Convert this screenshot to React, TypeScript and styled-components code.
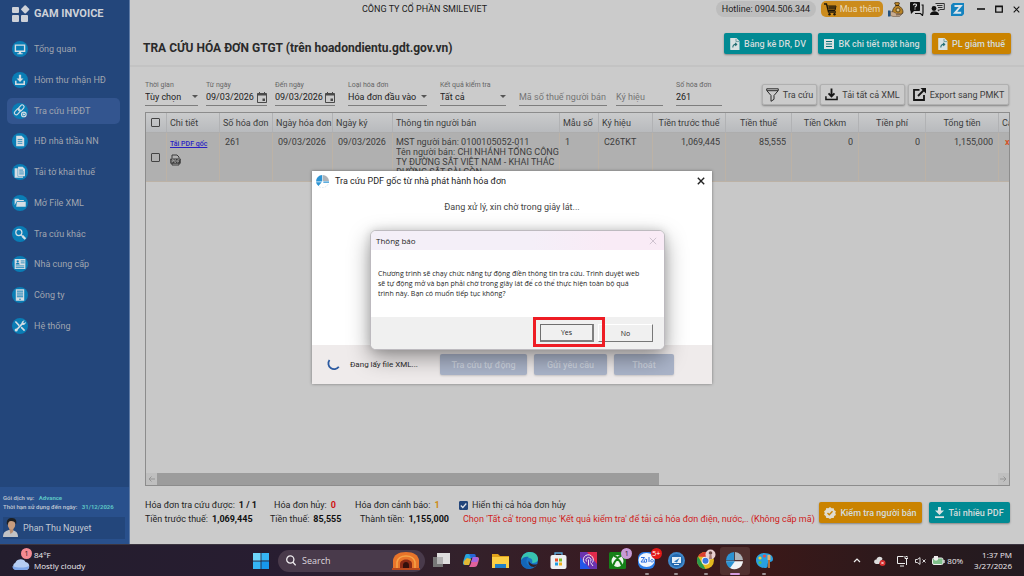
import React from "react";
import styled, { createGlobalStyle } from "styled-components";

const ui = `Roboto, "Noto Sans", sans-serif`;
const win = `"Open Sans", "Noto Sans", sans-serif`;

const GlobalStyle = createGlobalStyle`
  *, *::before, *::after { box-sizing: border-box; }
  body { margin: 0; background: #cbcbcb; font-family: ${ui}; font-size: 9px; color: #2b2b2b; }
  button, input, select { font: inherit; color: inherit; margin: 0; }
  svg { display: block; flex: none; }
`;

/* ---------- frame ---------- */
const Desktop = styled.div`
  position: relative;
  display: flex;
  flex-direction: column;
  min-height: 100vh;
`;
const AppWindow = styled.div`
  flex: 1;
  display: flex;
`;

/* ---------- sidebar ---------- */
const Sidebar = styled.aside`
  flex: none;
  width: 130px;
  display: flex;
  flex-direction: column;
  background: #23467b;
  border-right: 1px solid #5f7ba6;
`;
const Brand = styled.div`
  height: 34px;
  padding: 0 0 7px 12px;
  display: flex;
  align-items: center;
  gap: 4px;
  font-size: 11px;
  font-weight: 700;
  color: #cdd1d8;
`;
const Nav = styled.nav`
  display: grid;
  grid-auto-rows: 1fr;
  align-items: center;
  height: 307px;
  padding: 0 9px 0 7px;
`;
const NavLink = styled.a<{ $active?: boolean }>`
  display: flex;
  align-items: center;
  gap: 6px;
  height: 26px;
  padding-left: 5px;
  border-radius: 5px;
  font-size: 9px;
  color: #a0a5af;
  text-decoration: none;
  background: ${(p) => (p.$active ? "#33558f" : "transparent")};
`;
const Account = styled.div`
  margin-top: auto;
  padding: 6px 4px 5px 3px;
  background: #29508c;
  font-size: 6px;
  line-height: 9px;
  font-weight: 500;
  color: #c3c9d3;
`;
const PlanLine = styled.div`
  white-space: nowrap;
`;
const PlanValue = styled.b`
  margin-left: 3px;
  color: #5cc3c4;
`;
const User = styled.div`
  margin-top: 6px;
  height: 22px;
  display: flex;
  align-items: center;
  gap: 4px;
  background: #23467b;
  font-size: 9px;
  font-weight: 400;
`;

/* ---------- main ---------- */
const Main = styled.main`
  flex: 1;
  min-width: 0;
  display: flex;
  flex-direction: column;
`;
const TitleBar = styled.header`
  height: 18px;
  display: flex;
  align-items: center;
  padding-right: 2px;
`;
const Company = styled.div`
  margin-left: 232px;
  font-size: 9px;
  color: #1d1d1d;
`;
const Hotline = styled.div`
  margin-left: auto;
  height: 16px;
  width: 100px;
  border-radius: 8px;
  background: #bdbdbd;
  display: flex;
  align-items: center;
  justify-content: center;
  color: #1d1d1d;
`;
const BuyButton = styled.button`
  margin: 0 5px;
  width: 62px;
  height: 16px;
  padding: 0;
  border: 0;
  border-radius: 5px;
  background: #cc8c1d;
  color: #e8d9b8;
  display: flex;
  align-items: center;
  justify-content: center;
  gap: 3px;
`;
const TitleIcons = styled.div`
  display: flex;
  gap: 6px;
  margin-right: 11px;
`;
const IconButton = styled.button`
  padding: 0;
  border: 0;
  background: none;
  display: flex;
  align-items: center;
  justify-content: center;
`;
const WindowButtons = styled.div`
  display: flex;
  gap: 7px;
  & > button { width: 11px; height: 12px; }
`;
const PageHead = styled.div`
  height: 49px;
  padding: 4px 13px 0;
  display: flex;
  align-items: center;
  justify-content: space-between;
  border-bottom: 2px solid #c3c3c3;
`;
const PageTitle = styled.h1`
  margin: 9px 0 0;
  font-size: 12px;
  line-height: 16px;
  font-weight: 700;
  color: #2a2a2a;
`;
const ButtonRow = styled.div<{ $gap: number }>`
  display: flex;
  gap: ${(p) => p.$gap}px;
`;
const ActionButton = styled.button<{ $tone: "teal" | "amber" | "plain"; $width: number }>`
  width: ${(p) => p.$width}px;
  height: 21px;
  padding: 0;
  display: flex;
  align-items: center;
  justify-content: center;
  gap: 4px;
  white-space: nowrap;
  font-size: 9px;
  font-weight: ${(p) => (p.$tone === "plain" ? 400 : 500)};
  border-radius: 2px;
  border: ${(p) => (p.$tone === "plain" ? "1px solid #b0b0b0" : "0")};
  background: ${(p) => ({ teal: "#018a93", amber: "#ca8300", plain: "#cbcbcb" })[p.$tone]};
  color: ${(p) => (p.$tone === "plain" ? "#3c3c3c" : "#d3dcdc")};
  box-shadow: 0 1px 2px rgba(0, 0, 0, 0.35);
`;
const FilterActions = styled(ButtonRow)`
  margin: 11px 0 0 auto;
  align-self: flex-start;
`;
const Filters = styled.form`
  height: 45px;
  padding: 6px 15px 0 15px;
  display: flex;
  align-items: center;
`;
const Field = styled.label<{ $width: number; $after?: number }>`
  width: ${(p) => p.$width}px;
  margin-right: ${(p) => p.$after ?? 13}px;
  height: 27px;
  display: flex;
  flex-direction: column;
  justify-content: flex-end;
  border-bottom: 1px solid #7d7d7d;
`;
const FieldLabel = styled.span`
  font-size: 7px;
  line-height: 8px;
  white-space: nowrap;
  color: #666;
`;
const FieldBody = styled.span`
  display: flex;
  align-items: center;
  height: 16px;
`;
const fieldText = `
  flex: 1;
  width: 0;
  min-width: 0;
  padding: 0;
  border: 0;
  outline: 0;
  background: none;
  font-size: 9px;
  line-height: 14px;
  color: #222;
`;
const TextInput = styled.input`
  ${fieldText}
  &::placeholder { color: #747474; opacity: 1; }
`;
const Select = styled.select`
  ${fieldText}
  appearance: none;
`;

/* ---------- invoice table ---------- */
const GridBox = styled.section`
  flex: 1;
  margin: 0 14px 0 15px;
  border: 1px solid #8c8c8c;
  background: #c8c8c8;
  display: flex;
  flex-direction: column;
  justify-content: space-between;
  overflow: hidden;
`;
const TableClip = styled.div`
  overflow: hidden;
`;
const Table = styled.table`
  table-layout: fixed;
  width: 914px;
  border-collapse: separate;
  border-spacing: 0;
`;
const Th = styled.th<{ $center?: boolean }>`
  height: 20px;
  padding: 0 3px;
  text-align: ${(p) => (p.$center ? "center" : "left")};
  font-weight: 400;
  white-space: nowrap;
  color: #3c3c3c;
  background: linear-gradient(#cacbcc, #b8babd);
  border-right: 1px solid #b1b2b4;
  border-bottom: 1px solid #adadad;
`;
const Td = styled.td<{ $right?: boolean; $tight?: boolean }>`
  padding: ${(p) => (p.$tight ? "0 0 0 3px" : "0 5px")};
  text-align: ${(p) => (p.$right ? "right" : "left")};
  vertical-align: top;
  color: #3c3c3c;
  background: #b0b0b0;
  border-right: 1px solid #bcb2a6;
  border-bottom: 1px solid #bcb2a6;
`;
const CellBody = styled.div<{ $middle?: boolean }>`
  height: 48px;
  padding-top: ${(p) => (p.$middle ? 0 : 4)}px;
  display: ${(p) => (p.$middle ? "flex" : "block")};
  align-items: center;
  line-height: 10px;
  white-space: nowrap;
  overflow: hidden;
`;
const TickCell = styled.div`
  padding-left: 2px;
`;
const Tick = styled.input`
  appearance: none;
  display: block;
  flex: none;
  width: 9px;
  height: 9px;
  border: 1px solid #444;
  border-radius: 1px;
  background: transparent;
  &:checked {
    border-color: #23467b;
    background: #23467b;
  }
`;
const PdfLink = styled.a`
  display: block;
  margin: 2px 0 5px;
  font-size: 7px;
  font-weight: 500;
  line-height: 10px;
  color: #2a1fc4;
`;
const Warning = styled.span`
  margin-left: 1px;
  font-weight: 700;
  color: #d4552a;
`;
const ScrollBar = styled.div`
  height: 12px;
  display: flex;
  background: #c8c8c8;
`;
const ScrollArrow = styled.button`
  width: 11px;
  padding: 0;
  border: 0;
  background: #bfbfbf;
  display: flex;
  align-items: center;
  justify-content: center;
`;
const ScrollTrack = styled.div`
  flex: 1;
`;
const ScrollThumb = styled.div`
  width: calc(60% - 3px);
  height: 100%;
  background: #9c9c9c;
`;

/* ---------- summary ---------- */
const Footer = styled.footer`
  height: 58px;
  padding: 12px 14px 0 15px;
  display: flex;
`;
const Totals = styled.dl`
  margin: 0;
  display: grid;
  grid-template-columns: 125px 85px 104px;
  grid-auto-rows: 14px;
`;
const Total = styled.div<{ $indent?: number }>`
  display: flex;
  align-items: center;
  padding-left: ${(p) => p.$indent ?? 0}px;
  gap: 4px;
  white-space: nowrap;
  color: #1f1f1f;
`;
const TotalValue = styled.dd<{ $color?: string }>`
  margin: 0;
  font-weight: 700;
  color: ${(p) => p.$color ?? "#111"};
`;
const Notes = styled.div`
  flex: 1;
  min-width: 0;
  white-space: nowrap;
`;
const ShowAll = styled.label`
  height: 14px;
  display: flex;
  align-items: center;
  gap: 4px;
`;
const Hint = styled.p`
  margin: 0 0 0 4px;
  line-height: 14px;
  color: #d01c1c;
`;
const TickWrap = styled.span`
  display: grid;
  & > * { grid-area: 1 / 1; }
  & > svg { pointer-events: none; }
`;
const FooterButtons = styled(ButtonRow)`
  align-items: flex-start;
  padding-top: 4px;
`;

/* ---------- dialogs ---------- */
const Overlay = styled.div`
  position: absolute;
  inset: 0;
  padding-top: 171px;
  display: flex;
  justify-content: center;
  align-items: flex-start;
`;
const LookupDialog = styled.section`
  position: relative;
  width: 400px;
  background: #fff;
  box-shadow: 0 0 3px rgba(0, 0, 0, 0.4);
`;
const LookupTitle = styled.header`
  height: 20px;
  padding: 0 7px 0 4px;
  display: flex;
  align-items: center;
  gap: 6px;
  color: #1e1e1e;
  & > button { margin-left: auto; }
`;
const LookupBody = styled.p`
  margin: 0;
  height: 154px;
  padding-top: 10px;
  line-height: 12px;
  text-align: center;
  color: #444;
`;
const LookupFooter = styled.footer`
  height: 39px;
  padding: 0 38px 0 15px;
  display: flex;
  align-items: center;
  gap: 7px;
  background: #efebeb;
`;
const Progress = styled.span`
  margin: 0 auto 0 3px;
  font-size: 8px;
  color: #2a2a2a;
`;
const MutedButton = styled.button<{ $width: number }>`
  width: ${(p) => p.$width}px;
  height: 21px;
  padding: 0;
  border: 0;
  border-radius: 2px;
  background: #aab4c9;
  color: #cdd3df;
  font-size: 9px;
  font-weight: 500;
  box-shadow: 0 1px 2px rgba(0, 0, 0, 0.15);
`;
const ConfirmDialog = styled.section`
  position: absolute;
  left: 58px;
  top: 59px;
  width: 295px;
  border: 1px solid #bdbabf;
  border-radius: 6px;
  overflow: hidden;
  background: #fff;
  font-family: ${win};
  color: #1e1e1e;
  box-shadow: 0 8px 22px rgba(0, 0, 0, 0.38), 0 0 10px rgba(0, 0, 0, 0.14);
`;
const ConfirmTitle = styled.header`
  height: 19px;
  padding: 0 7px 0 5px;
  display: flex;
  align-items: center;
  justify-content: space-between;
  font-size: 8px;
  line-height: 10px;
  background: linear-gradient(90deg, #f4eff8 55%, #f9ebf6 80%);
`;
const ConfirmText = styled.p`
  margin: 0;
  height: 67px;
  padding: 19px 7px 0;
  font-size: 7px;
  line-height: 10px;
`;
const ConfirmActions = styled.footer`
  height: 32px;
  padding: 0 11px 0 0;
  display: flex;
  justify-content: flex-end;
  align-items: center;
  gap: 4px;
  background: #f0f0f0;
`;
const ClassicButton = styled.button<{ $primary?: boolean }>`
  position: relative;
  z-index: ${(p) => (p.$primary ? 1 : 0)};
  width: ${(p) => (p.$primary ? 54 : 55)}px;
  height: 18px;
  padding: 0;
  font-size: 7px;
  background: #f0f0f0;
  border-style: solid;
  border-width: ${(p) => (p.$primary ? "1px 2px 2px 1px" : "1px")};
  border-color: ${(p) => (p.$primary ? "#6f6f6f #7f7f7f #7f7f7f #6f6f6f" : "#fff #777 #777 #fff")};
`;
const Highlight = styled.span`
  position: absolute;
  inset: -8px -13px -7px -8px;
  border: 3px solid #ee1c24;
`;

/* ---------- taskbar ---------- */
const Taskbar = styled.footer`
  height: 32px;
  padding: 0 12px;
  display: flex;
  align-items: center;
  font-family: ${win};
  font-size: 8px;
  line-height: 11px;
  color: #f0edf0;
  border-top: 1px solid #3b3540;
  background: linear-gradient(90deg, #231d2d 0%, #281d31 28%, #33212b 45%, #3a1a20 62%, #3a1818 75%, #271a1e 92%, #231a20 100%);
`;
const Weather = styled.div`
  width: 241px;
  display: flex;
  align-items: center;
  gap: 2px;
`;
const WeatherText = styled.div`
  padding-bottom: 2px;
`;
const Apps = styled.div`
  display: flex;
  align-items: center;
`;
const SearchBox = styled.label`
  margin: 0 2px 0 9px;
  width: 147px;
  height: 22px;
  padding: 0 5px 0 8px;
  border-radius: 11px;
  background: #493a4b;
  display: flex;
  align-items: center;
  gap: 6px;
  font-size: 9px;
`;
const SearchInput = styled.input`
  flex: 1;
  width: 0;
  padding: 0;
  border: 0;
  outline: 0;
  background: none;
  &::placeholder { color: #dcd6dd; opacity: 1; }
`;
const AppStrip = styled.div`
  width: 352px;
  display: grid;
  grid-template-columns: repeat(12, 1fr);
`;
const AppSlot = styled.button<{ $current?: boolean }>`
  position: relative;
  height: 28px;
  padding: 0;
  border: 0;
  border-radius: 3px;
  display: flex;
  align-items: center;
  justify-content: center;
  background: ${(p) => (p.$current ? "#50302f" : "none")};
`;
const RunMark = styled.i<{ $current?: boolean }>`
  position: absolute;
  bottom: 0;
  width: ${(p) => (p.$current ? 10 : 4)}px;
  height: 2px;
  border-radius: 1px;
  background: ${(p) => (p.$current ? "#d59be0" : "#9b9093")};
`;
const Badge = styled.span<{ $bg: string; $fg: string }>`
  position: absolute;
  top: 1px;
  right: 0;
  min-width: 11px;
  height: 11px;
  border-radius: 6px;
  background: ${(p) => p.$bg};
  color: ${(p) => p.$fg};
  font-size: 7px;
  line-height: 11px;
  text-align: center;
`;
const WeatherIcon = styled.div`
  position: relative;
  width: 20px;
  & > span { top: -3px; }
`;
const Tray = styled.div`
  margin-left: auto;
  display: flex;
  align-items: center;
  gap: 7px;
`;
const Battery = styled.span`
  margin-left: -1px;
  display: flex;
  align-items: center;
  gap: 2px;
`;
const Clock = styled.time`
  margin-left: 4px;
  padding-bottom: 2px;
  text-align: right;
  white-space: nowrap;
`;

/* ---------- drawings ---------- */
const navGlyphs: Record<string, React.ReactNode> = {
  monitor: <><path d="M6 7h12v8H6z" fill="none" stroke="#d5dde4" strokeWidth="1.8" /><path d="M10.500 16h3v2h-3zM8.500 17.500h7v1.300h-7z" /></>,
  inbox: <path d="M10.500 5h3v5h3L12 14.500 7.500 10h3zM5.500 13h2v3.500h9V13h2v5.500h-13z" />,
  link: <g fill="none" stroke="#d5dde4" strokeWidth="1.500"><rect x="4" y="10.500" width="9" height="5" rx="2.500" transform="rotate(-48 8.500 13)" /><rect x="9" y="5.500" width="9" height="5" rx="2.500" transform="rotate(-48 13.500 8)" /><circle cx="17" cy="16.500" r="3" fill="#0a7db5" /><path d="M17 15v3M15.500 16.500h3" /></g>,
  doc: <><path d="M7 5h7l3.500 3.500V19H7z" /><path d="M9 10h6M9 12.500h6M9 15h6" stroke="#0a7db5" /></>,
  docs: <><path d="M5 7h4v11h7v1.500H5z" /><path d="M9.500 5h6l3 3v9.500h-9z" /><path d="M11 9.500h5M11 12h6M11 14.500h6" stroke="#0a7db5" /></>,
  folder: <><path d="M5 6.500h5l1.500 1.500H17v1.500H8L5 15z" /><path d="M8 10.500h11.500V17H7z" /></>,
  search: <g fill="none" stroke="#d5dde4"><circle cx="10.500" cy="10" r="4" strokeWidth="1.600" /><path d="M13.500 13l2 2" strokeWidth="1.500" /><path d="M15 14.500l4 4" strokeWidth="3" /></g>,
  card: <><path d="M5 5.500h14v13H5z" /><circle cx="9" cy="8.500" r="1.500" fill="#0a7db5" /><path d="M6.500 12.500c0-3 5-3 5 0z" fill="#0a7db5" /><path d="M13 8h5M13 10.500h5M6.500 14.500h11M6.500 16.700h11" stroke="#0a7db5" /></>,
  tablet: <><path d="M6.500 4.500h11v15h-11z" /><path d="M8 7h8M8 9.500h8M8 12h8M8 14.300h8" stroke="#0a7db5" strokeWidth="1.200" /><circle cx="12" cy="17.500" r="1" fill="#0a7db5" /></>,
  tools: <><path d="M7 17.500L16 8" stroke="#d5dde4" strokeWidth="2.200" /><path d="M6 6l5 5.500M13.500 13.500l4.500 4.500" stroke="#d5dde4" strokeWidth="2" /><path d="M14 8.500a3.500 3.500 0 0 1 4-3.500l-2 2 1.500 1.500 2-2a3.500 3.500 0 0 1-4.500 4z" /><circle cx="7" cy="17.300" r="2" /></>,
};
const NavIcon = ({ name }: { name: string }) => (
  <svg width="16" height="16" viewBox="0 0 24 24" fill="#d5dde4" aria-hidden="true">
    <circle cx="12" cy="12" r="12" fill="#0a7db5" />
    <g transform="translate(-1.800 -1.800) scale(1.150)">{navGlyphs[name]}</g>
  </svg>
);
const Caret = () => (
  <svg width="6" height="4" viewBox="0 0 6 4" aria-hidden="true"><path d="M0 0h6L3 3z" fill="#555" /></svg>
);
const Calendar = () => (
  <svg width="10" height="11" viewBox="0 0 10 11" fill="#4a4a4a" aria-hidden="true">
    <path fillRule="evenodd" d="M2 0h1v1h4V0h1v1h1.200c.4 0 .8.400.8.800v8.400c0 .400-.4.800-.8.800H.8C.4 11 0 10.600 0 10.200V1.800C0 1.400.4 1 .8 1H2zM1 3.500V10h8V3.500z" /><path d="M5.500 6.500H8V9H5.500z" />
  </svg>
);
const FileArrow = () => (
  <svg width="10" height="12" viewBox="0 0 10 12" aria-hidden="true">
    <path d="M.7 0H6.500l3 3v9H.7C.4 12 .2 11.800.2 11.500V.5C.2.2.4 0 .7 0z" fill="#d9e2e2" />
    <path d="M6 .8v2.800h3" fill="none" stroke="#5a8f92" strokeWidth=".8" />
    <path d="M3 9.500a2.400 2.400 0 0 1 3-3M5 5l1.700 1.400L5.300 8" fill="none" stroke="#256f74" strokeWidth="1.100" />
  </svg>
);
const ListBox = () => (
  <svg width="10" height="10" viewBox="0 0 10 10" aria-hidden="true">
    <path d="M0 0h10v10H0z" fill="#d9e2e2" /><path d="M2 2.500h6M2 5h6M2 7.500h6" stroke="#0a7178" />
  </svg>
);
const Funnel = () => (
  <svg width="13" height="14" viewBox="0 0 13 14" fill="none" stroke="#2b2b2b" strokeLinejoin="round" aria-hidden="true">
    <path d="M.7.800h11.600v1.700L8 7.500v3.800L5 13.300V7.500L.7 2.500zM1 2.700h11" />
  </svg>
);
const TrayDown = () => (
  <svg width="13" height="13" viewBox="0 0 14 13" aria-hidden="true">
    <path d="M7 0v8M3.800 5.300L7 8.500l3.200-3.200" fill="none" stroke="#151515" strokeWidth="2" />
    <path d="M1 8.500v3.500h12V8.500" fill="none" stroke="#151515" strokeWidth="1.600" />
  </svg>
);
const ExportIcon = () => (
  <svg width="13" height="13" viewBox="0 0 13 13" fill="none" stroke="#151515" aria-hidden="true">
    <path d="M6.500 1.800H1v10.200h10V7" strokeWidth="1.800" /><path d="M5 8l6-6" strokeWidth="1.800" /><path d="M7.500 0H13v5.500z" fill="#151515" stroke="none" />
  </svg>
);
const Verified = () => (
  <svg width="12" height="12" viewBox="0 0 24 24" aria-hidden="true">
    <path d="M12 0l3.300 2.500 4.100-.2 1.100 4 3.400 2.300L22.500 12l1.400 3.800-3.400 2.300-1.100 4-4.100-.2L12 24l-3.300-2.200-4.100.2-1.100-4-3.400-2.300L1.500 12 .1 8.500l3.400-2.300 1.100-4 4.100.3z" fill="#e0dccf" />
    <path d="M7 12l3.500 3.500L17 8.500" fill="none" stroke="#ca8300" strokeWidth="2.800" />
  </svg>
);
const DownloadIcon = () => (
  <svg width="9" height="11" viewBox="0 0 9 11" fill="#d9e2e2" aria-hidden="true"><path d="M3 0h3v3.500h3L4.500 8 0 3.500h3zM0 9.300h9V11H0z" /></svg>
);
const PdfIcon = () => (
  <svg width="11" height="12" viewBox="0 0 22 24" aria-hidden="true">
    <path d="M4 9V2h10l4 4v3M4 18v4h14v-4" fill="none" stroke="#3a3a3a" strokeWidth="2" />
    <path d="M2 9h18c1 0 1.500.500 1.500 1.500V18c0 1-.5 1.500-1.500 1.500H2C1 19.500.5 19 .5 18v-7.500C.5 9.500 1 9 2 9z" fill="#3a3a3a" />
    <path d="M4 17.500v-6h3v3H4M9.500 11.500v5.500H11c2 0 2-5.500 0-5.500zM15.500 17.500v-6h3.500M15.500 14.500H18" fill="none" stroke="#c4c4c4" strokeWidth="1.300" />
  </svg>
);
const BrandMark = () => (
  <svg width="18" height="17" viewBox="0 0 18 17" fill="#cdd1d8" aria-hidden="true">
    <rect x="0" y="2" width="7" height="6" rx="1" /><rect x="0" y="10" width="7" height="7" rx="1" /><rect x="9" y="10" width="7" height="7" rx="1" />
    <rect x="10" y="1.200" width="6.400" height="6.400" rx="1" transform="rotate(45 13.200 4.400)" />
  </svg>
);
const Avatar = () => (
  <svg width="16" height="20" viewBox="0 0 16 20" aria-hidden="true">
    <path d="M0 19c0-5 3-7 7.500-7s7.500 2 7.500 7z" fill="#c2c3c6" /><path d="M6 10h4.500l-.5 4-2.500 2z" fill="#b98d70" />
    <ellipse cx="8.500" cy="6.500" rx="3.700" ry="5" fill="#c79c7e" /><path d="M3.800 6C3.500 1 6 0 9 0c4 0 5 3 4 6.500-.8-3-2.500-3.500-5-3.500C6 3 5 4 5 7z" fill="#1d1f22" />
  </svg>
);
const Cart = () => (
  <svg width="13" height="13" viewBox="0 0 13 13" fill="none" stroke="#1c1608" aria-hidden="true">
    <path d="M0 1h2.500l2 8H12" strokeWidth="1.300" /><path d="M3 3h9l-1 4.500H4M6 3v4.500M8 3v4.500M10 3v4.500M3.500 5h8" /><circle cx="5.500" cy="11.300" r="1.200" fill="#1c1608" stroke="none" /><circle cx="10.500" cy="11.300" r="1.200" fill="#1c1608" stroke="none" />
  </svg>
);
const MoneyBag = () => (
  <svg width="16" height="15" viewBox="0 0 16 15" aria-hidden="true">
    <path d="M6.500 1L9 0l2.500 1-1 2.500c3 2 4.500 4 4.500 6.500 0 2-1.500 2.500-5 2.500S4.500 12 4.500 10c0-2.500 1.200-4.500 3.500-6.500z" fill="#b98427" stroke="#3f2c0d" strokeWidth=".7" />
    <path d="M7.500 3.500h3.500" stroke="#3f2c0d" /><circle cx="10" cy="8" r="2" fill="#d8c08a" stroke="#4b350f" strokeWidth=".8" />
    <path d="M2.500 9.500l3 .5 3 1.500h3c1 0 1 1.300 0 1.300H8l4.500-.3 2.500-1.500-3.500 3.500H5l-2.500-1z" fill="#c8ab8e" stroke="#5a4636" strokeWidth=".5" /><path d="M0 8.500h2.500v6H0z" fill="#20507f" />
  </svg>
);
const HelpChat = () => (
  <svg width="14" height="14" viewBox="0 0 14 14" aria-hidden="true">
    <path d="M1 0h8c.6 0 1 .4 1 1v7c0 .6-.4 1-1 1H4l-3 3-.5-3.200C.2 8.600 0 8.300 0 8V1c0-.6.4-1 1-1z" fill="#111" />
    <path d="M11.500 3H13v8l-.5 2.500-2-2H5" fill="none" stroke="#111" strokeWidth="1.200" />
    <path d="M3.500 3.200C3.500 1.500 6.700 1.600 6.500 3.300 6.400 4.200 5 4.200 5 5.500M5 6.500v1" fill="none" stroke="#ddd" strokeWidth="1.200" />
  </svg>
);
const SupportChat = () => (
  <svg width="15" height="14" viewBox="0 0 15 14" aria-hidden="true">
    <circle cx="4" cy="6.500" r="2.400" fill="#111" /><path d="M0 13c0-5 9-5 9 0z" fill="#111" />
    <path d="M5.500 1.500h8.800v6H10L8.300 9V7.500M7 3.500h5.500M8 5.500h4.500" fill="none" stroke="#222" strokeWidth=".9" />
  </svg>
);
const ZaloMark = () => (
  <svg width="13" height="13" viewBox="0 0 13 13" aria-hidden="true">
    <path d="M2 0h11v11l-2 2H0V2z" fill="#1583bf" /><path d="M3.500 3h6.300L4 9.800h6.200" fill="none" stroke="#dbe4ea" strokeWidth="1.900" />
  </svg>
);
const Cross = ({ size, color, width = 1 }: { size: number; color: string; width?: number }) => (
  <svg width={size} height={size} viewBox="0 0 8 8" aria-hidden="true"><path d="M.8.800l6.400 6.400M7.200.8L.8 7.200" stroke={color} strokeWidth={width} /></svg>
);
const AppMark = () => (
  <svg width="13" height="13" viewBox="0 0 16 16" aria-hidden="true">
    <path d="M7.600 8V0A8 8 0 0 0 0 8z" fill="#2b93d3" /><path d="M8.300 7.400V0A8 8 0 0 1 16 7.400z" fill="#aeb3b8" />
    <path d="M0 9h7l-4 4.500A8 8 0 0 1 0 9zM9 8h7v1.500H9z" fill="#2b93d3" /><path d="M4 14.500a8 8 0 0 0 11.500-4.500" fill="none" stroke="#cfe0ea" strokeDasharray="2 1.500" />
  </svg>
);
const Spinner = () => (
  <svg width="13" height="13" viewBox="0 0 13 13" aria-hidden="true"><path d="M2.500 2A5.500 5.500 0 0 0 11.800 8.800" fill="none" stroke="#2c5aa0" strokeWidth="1.800" /></svg>
);
const ArrowGlyph = ({ right }: { right?: boolean }) => (
  <svg width="7" height="6" viewBox="0 0 7 6" fill="none" stroke="#959595" aria-hidden="true"><path d={right ? "M0 3h6M3.500.500L6 3 3.500 5.500" : "M7 3H1M3.500.500L1 3l2.500 2.500"} /></svg>
);

const taskApps: { name: string; art: React.ReactNode; run?: boolean; current?: boolean; badge?: [string, string, string] }[] = [
  { name: "Task view", art: <><path d="M0 5h10v10H0z" fill="#777" /><path d="M4 1h13v11H4z" fill="#dedede" /><path d="M4 5h6v7H4z" fill="#b3b3b3" /></> },
  { name: "Copilot", art: <><path d="M5 2h6c-2 2-3 8-4 11H3C0 13 1 10 2 7s1-5 3-5z" fill="#27a5dd" /><path d="M5 6L2 9c-1 3 0 4 2 4h3l2-6z" fill="#e3b834" /><path d="M7 2h5c2 0 2 2 1.500 4H9z" fill="#2467d5" /><path d="M12 15H7c2-2 3-8 4-10h4c3 0 2 3 1 6s-1.500 4-4 4z" fill="#e0619b" /><path d="M11 5h3c3 0 2 3 1 5H9z" fill="#a564e0" /></> },
  { name: "File Explorer", art: <><path d="M0 2h6l2 2h9v11H0z" fill="#e0a21b" /><path d="M0 5h17v11H0z" fill="#fbcf45" /><path d="M3 12h11v4H3z" fill="#1f7fc8" /></> },
  { name: "Edge", art: <><circle cx="8.500" cy="8.500" r="8.500" fill="#1a77c9" /><path d="M0 8C1 2 5 0 9 0c5 0 8 3 8 7 0 3-3 4-6 4 1-2 0-5-3-5-4 0-6 2-8 2z" fill="#38c4b0" /><path d="M0 8c2-3 5-4 8-3-2 1-3 3-2.500 5.500S9 15 13 14.500C7 20-1 15 0 8z" fill="#1466b8" /><path d="M8 8.500c0 3 4 5 8.500 3.500-.8 1.500-2 2.500-3.500 3-4 0-6.500-3-5-6.500z" fill="#301f27" /></> },
  { name: "Store", art: <><path d="M5 4V1h7v3" fill="none" stroke="#5aa7d8" strokeWidth="1.300" /><rect x=".5" y="3" width="16" height="14" rx="2" fill="#eef0f2" /><path d="M5 6.500h3v3H5z" fill="#e5502b" /><path d="M9 6.500h3v3H9z" fill="#7ab829" /><path d="M5 10.500h3v3H5z" fill="#1f9de0" /><path d="M9 10.500h3v3H9z" fill="#f0b01c" /></> },
  { name: "Identity", art: <><path d="M0 0h17v17H0z" fill="#6a34b0" /><path d="M7 0h10v12z" fill="#e02a4c" /><path d="M0 5l10 12H0z" fill="#2456e8" /><g fill="none" stroke="#f0e4ee"><path d="M5 11.500a5 5 0 1 1 7.500-1M6.500 9.500a2.500 2.500 0 1 1 4 0M8.500 7.500v6M10.500 10.500l2.500 3.500" /></g></> },
  { name: "Xbox", art: <><rect width="17" height="17" rx="1.500" fill="#158018" /><circle cx="8.500" cy="9" r="6" fill="#eff5ef" /><path d="M4 14C5 10 7 8 8.500 7c1.500 1 3.500 3 4.500 7M5 4c1.500 0 2.500 1 3.500 2 1-1 2-2 3.500-2" fill="none" stroke="#158018" strokeWidth="1.800" /></>, badge: ["1", "#c79ad6", "#2a1830"] },
  { name: "Zalo", art: <><rect width="17" height="17" rx="6" fill="#2b7de9" /><ellipse cx="8.500" cy="8" rx="8" ry="7" fill="#f2f7ff" /><path d="M3 5.500h3.500L3 10h4M8.500 7.500a1.500 1.500 0 1 0 .1 2.500V7M11 5v5M14 7.500a1.300 1.300 0 1 0 .1 0" fill="none" stroke="#2b6fe0" /></>, run: true, badge: ["5+", "#e51919", "#fff"] },
  { name: "Remote", art: <><circle cx="8.500" cy="8.500" r="8.500" fill="#3f86c8" /><circle cx="8.500" cy="8.500" r="6.500" fill="#2368ae" /><path d="M4 5h9v6H4z" fill="#e6f0f8" /><path d="M6 9.500L11.500 6 9 10.500z" fill="#2d78bf" /><path d="M6 12.500h5" stroke="#e6f0f8" /></>, run: true },
  { name: "Chrome", art: <><circle cx="8.500" cy="8.500" r="8.500" fill="#e5b91f" /><path d="M1 4.500A8.500 8.500 0 0 1 16 4.500L8.500 5z" fill="#dc3f31" /><path d="M1 4.500L5 11l3.500 6A8.500 8.500 0 0 1 1 4.500z" fill="#2a9a4a" /><circle cx="8.500" cy="8.700" r="4" fill="#f3f3f3" /><circle cx="8.500" cy="8.700" r="3" fill="#3a77e0" /><circle cx="13.500" cy="2.500" r="5" fill="#e8cfd0" /><circle cx="13.500" cy="1" r="1.800" fill="#6b4a46" /><path d="M12.500 3h2l.5 4h-3z" fill="#a87b78" /></>, run: true },
  { name: "GAM Invoice", art: <><path d="M8.200 8.500V0A8.500 8.500 0 0 0 0 8.500z" fill="#2b93d3" /><path d="M9 8V0a8.500 8.500 0 0 1 8 8z" fill="#aeb3b8" /><path d="M0 9.300h17A8.500 8.500 0 0 1 4 16z" fill="#f2f4f6" /><path d="M0 9.300h9L4 16A8.500 8.500 0 0 1 0 9.300z" fill="#2b93d3" /></>, run: true, current: true },
  { name: "Paint", art: <><path d="M8 1c6 0 9 3 9 6 0 4-4 2-5 4s1 5-3 5c-6 0-9-4-9-8s4-7 8-7z" fill="#28a0e0" /><circle cx="4" cy="6" r="1.600" fill="#f0d030" /><circle cx="4" cy="10.500" r="1.600" fill="#58c05a" /><circle cx="8.500" cy="4" r="1.600" fill="#e05050" /><path d="M12 6l2 0v10h-2z" fill="#b2713a" /><path d="M11.500 3h3v5h-3z" fill="#e3b070" /></>, run: true },
];

const navItems: [string, string][] = [
  ["monitor", "Tổng quan"],
  ["inbox", "Hòm thư nhận HĐ"],
  ["link", "Tra cứu HĐĐT"],
  ["doc", "HĐ nhà thầu NN"],
  ["docs", "Tải tờ khai thuế"],
  ["folder", "Mở File XML"],
  ["search", "Tra cứu khác"],
  ["card", "Nhà cung cấp"],
  ["tablet", "Công ty"],
  ["tools", "Hệ thống"],
];

const columns: [string, number, boolean?][] = [
  ["Chi tiết", 53],
  ["Số hóa đơn", 53],
  ["Ngày hóa đơn", 60],
  ["Ngày ký", 60],
  ["Thông tin người bán", 167],
  ["Mẫu số", 39],
  ["Ký hiệu", 54],
  ["Tiền trước thuế", 73, true],
  ["Tiền thuế", 66, true],
  ["Tiền Ckkm", 67, true],
  ["Tiền phí", 67, true],
  ["Tổng tiền", 73, true],
  ["Cảnh báo", 61],
];

export default function App() {
  return (
    <Desktop>
      <GlobalStyle />
      <AppWindow>
        <Sidebar>
          <Brand><BrandMark />GAM INVOICE</Brand>
          <Nav>
            {navItems.map(([icon, text]) => (
              <NavLink key={text} href="#" $active={icon === "link"}><NavIcon name={icon} />{text}</NavLink>
            ))}
          </Nav>
          <Account>
            <PlanLine>Gói dịch vụ: <PlanValue>Advance</PlanValue></PlanLine>
            <PlanLine>Thời hạn sử dụng đến ngày: <PlanValue>31/12/2026</PlanValue></PlanLine>
            <User><Avatar />Phan Thu Nguyet</User>
          </Account>
        </Sidebar>

        <Main>
          <TitleBar>
            <Company>CÔNG TY CỔ PHẦN SMILEVIET</Company>
            <Hotline>Hotline: 0904.506.344</Hotline>
            <BuyButton><Cart />Mua thêm</BuyButton>
            <TitleIcons>
              <IconButton aria-label="Thanh toán"><MoneyBag /></IconButton>
              <IconButton aria-label="Trợ giúp"><HelpChat /></IconButton>
              <IconButton aria-label="Hỗ trợ"><SupportChat /></IconButton>
              <IconButton aria-label="Zalo"><ZaloMark /></IconButton>
            </TitleIcons>
            <WindowButtons>
              <IconButton aria-label="Thu nhỏ"><svg width="8" height="8" viewBox="0 0 8 8"><path d="M0 4h8" stroke="#111" strokeWidth="1.600" /></svg></IconButton>
              <IconButton aria-label="Phóng to"><svg width="8" height="8" viewBox="0 0 8 8"><path d="M.7 1.200h6.600v6H.7zM.7 1.500h6.600" fill="none" stroke="#111" strokeWidth="1.300" /></svg></IconButton>
              <IconButton aria-label="Đóng"><Cross size={7} color="#111" width={1.2} /></IconButton>
            </WindowButtons>
          </TitleBar>

          <PageHead>
            <PageTitle>TRA CỨU HÓA ĐƠN GTGT (trên hoadondientu.gdt.gov.vn)</PageTitle>
            <ButtonRow $gap={6}>
              <ActionButton $tone="teal" $width={88}><FileArrow />Bảng kê DR, DV</ActionButton>
              <ActionButton $tone="teal" $width={108}><ListBox />BK chi tiết mặt hàng</ActionButton>
              <ActionButton $tone="amber" $width={79}><FileArrow />PL giảm thuế</ActionButton>
            </ButtonRow>
          </PageHead>

          <Filters onSubmit={(e) => e.preventDefault()}>
            <Field $width={53} $after={8}>
              <FieldLabel>Thời gian</FieldLabel>
              <FieldBody><Select defaultValue="a"><option value="a">Tùy chọn</option></Select><Caret /></FieldBody>
            </Field>
            <Field $width={61} $after={8}>
              <FieldLabel>Từ ngày</FieldLabel>
              <FieldBody><TextInput defaultValue="09/03/2026" /><Calendar /></FieldBody>
            </Field>
            <Field $width={60}>
              <FieldLabel>Đến ngày</FieldLabel>
              <FieldBody><TextInput defaultValue="09/03/2026" /><Calendar /></FieldBody>
            </Field>
            <Field $width={79}>
              <FieldLabel>Loại hóa đơn</FieldLabel>
              <FieldBody><Select defaultValue="a"><option value="a">Hóa đơn đầu vào</option></Select><Caret /></FieldBody>
            </Field>
            <Field $width={66}>
              <FieldLabel>Kết quả kiểm tra</FieldLabel>
              <FieldBody><Select defaultValue="a"><option value="a">Tất cả</option></Select><Caret /></FieldBody>
            </Field>
            <Field $width={88} $after={9}>
              <FieldBody><TextInput placeholder="Mã số thuế người bán" aria-label="Mã số thuế người bán" /></FieldBody>
            </Field>
            <Field $width={47}>
              <FieldBody><TextInput placeholder="Ký hiệu" aria-label="Ký hiệu" /></FieldBody>
            </Field>
            <Field $width={46} $after={0}>
              <FieldLabel>Số hóa đơn</FieldLabel>
              <FieldBody><TextInput defaultValue="261" /></FieldBody>
            </Field>
            <FilterActions $gap={3}>
              <ActionButton $tone="plain" $width={55}><Funnel />Tra cứu</ActionButton>
              <ActionButton $tone="plain" $width={85}><TrayDown />Tải tất cả XML</ActionButton>
              <ActionButton $tone="plain" $width={101}><ExportIcon />Export sang PMKT</ActionButton>
            </FilterActions>
          </Filters>

          <GridBox>
            <TableClip>
              <Table>
                <colgroup>
                  <col width={21} />
                  {columns.map(([name, width]) => <col key={name} width={width} />)}
                </colgroup>
                <thead>
                  <tr>
                    <Th><TickCell><Tick type="checkbox" aria-label="Chọn tất cả" /></TickCell></Th>
                    {columns.map(([name, , center]) => <Th key={name} $center={center}>{name}</Th>)}
                  </tr>
                </thead>
                <tbody>
                  <tr>
                    <Td><CellBody $middle><Tick type="checkbox" aria-label="Chọn hóa đơn 261" /></CellBody></Td>
                    <Td $tight><CellBody><PdfLink href="#">Tải PDF gốc</PdfLink><PdfIcon /></CellBody></Td>
                    <Td><CellBody>261</CellBody></Td>
                    <Td><CellBody>09/03/2026</CellBody></Td>
                    <Td><CellBody>09/03/2026</CellBody></Td>
                    <Td $tight><CellBody>MST người bán: 0100105052-011<br />Tên người bán: CHI NHÁNH TỔNG CÔNG<br />TY ĐƯỜNG SẮT VIỆT NAM - KHAI THÁC<br />ĐƯỜNG SẮT SÀI GÒN</CellBody></Td>
                    <Td><CellBody>1</CellBody></Td>
                    <Td><CellBody>C26TKT</CellBody></Td>
                    <Td $right><CellBody>1,069,445</CellBody></Td>
                    <Td $right><CellBody>85,555</CellBody></Td>
                    <Td $right><CellBody>0</CellBody></Td>
                    <Td $right><CellBody>0</CellBody></Td>
                    <Td $right><CellBody>1,155,000</CellBody></Td>
                    <Td><CellBody><Warning>x</Warning></CellBody></Td>
                  </tr>
                </tbody>
              </Table>
            </TableClip>
            <ScrollBar>
              <ScrollArrow aria-label="Cuộn trái"><ArrowGlyph /></ScrollArrow>
              <ScrollTrack><ScrollThumb /></ScrollTrack>
              <ScrollArrow aria-label="Cuộn phải"><ArrowGlyph right /></ScrollArrow>
            </ScrollBar>
          </GridBox>

          <Footer>
            <Totals>
              <Total><dt>Hóa đơn tra cứu được:</dt><TotalValue>1 / 1</TotalValue></Total>
              <Total $indent={4}><dt>Hóa đơn hủy:</dt><TotalValue $color="#d01414">0</TotalValue></Total>
              <Total><dt>Hóa đơn cảnh báo:</dt><TotalValue $color="#cb8a12">1</TotalValue></Total>
              <Total><dt>Tiền trước thuế:</dt><TotalValue>1,069,445</TotalValue></Total>
              <Total><dt>Tiền thuế:</dt><TotalValue>85,555</TotalValue></Total>
              <Total $indent={5}><dt>Thành tiền:</dt><TotalValue>1,155,000</TotalValue></Total>
            </Totals>
            <Notes>
              <ShowAll>
                <TickWrap>
                  <Tick type="checkbox" defaultChecked />
                  <svg width="9" height="9" viewBox="0 0 9 9"><path d="M1.800 4.500l2 2 3.500-4" fill="none" stroke="#e0e4ea" strokeWidth="1.200" /></svg>
                </TickWrap>
                Hiển thị cả hóa đơn hủy
              </ShowAll>
              <Hint>Chọn 'Tất cả' trong mục 'Kết quả kiểm tra' để tải cả hóa đơn điện, nước,.. (Không cấp mã)</Hint>
            </Notes>
            <FooterButtons $gap={7}>
              <ActionButton $tone="amber" $width={103}><Verified />Kiểm tra người bán</ActionButton>
              <ActionButton $tone="teal" $width={81}><DownloadIcon />Tải nhiều PDF</ActionButton>
            </FooterButtons>
          </Footer>
        </Main>
      </AppWindow>

      <Taskbar>
        <Weather>
          <WeatherIcon>
            <svg width="18" height="20" viewBox="0 0 18 20"><path d="M4 19a4 4 0 0 1-.5-7.500C5 7.500 12 7 13.500 11c5 .5 5 8 0 8z" fill="#b6cdf2" /><path d="M3 19a4 4 0 0 1-2.500-4c5 2 12 2 16.500 0 0 3-1.500 4-3.500 4z" fill="#7fa6e8" /></svg>
            <Badge $bg="#f58a92" $fg="#2b1518">1</Badge>
          </WeatherIcon>
          <WeatherText>84°F<br />Mostly cloudy</WeatherText>
        </Weather>
        <Apps>
          <IconButton aria-label="Start">
            <svg width="16" height="16" viewBox="0 0 16 16" fill="#35b5f5"><path d="M0 0h7.600v7.600H0z" fill="#6fd6fa" /><path d="M8.400 0H16v7.600H8.400zM0 8.400h7.600V16H0z" /><path d="M8.400 8.400H16V16H8.400z" fill="#1798ee" /></svg>
          </IconButton>
          <SearchBox>
            <svg width="10" height="11" viewBox="0 0 10 11" fill="none" stroke="#f0edf0" strokeWidth="1.300"><circle cx="4.300" cy="4.500" r="3.600" /><path d="M7 7.300l2.700 3" /></svg>
            <SearchInput placeholder="Search" aria-label="Search" />
            <svg width="28" height="19" viewBox="0 0 28 19"><path d="M1 18V9c1-5 5-8 13-8s12 3 13 8v9z" fill="#e8742a" /><path d="M5 18v-7c1-4 4-6 9-6s8 2 9 6v7" fill="none" stroke="#f6a447" strokeWidth="1.500" /><path d="M8 18v-5c0-6 12-6 12 0v5z" fill="#8b2b16" /><path d="M11 18v-4c0-4 6-4 6 0v4z" fill="#33100c" /><path d="M0 17h28v2H0z" fill="#b8481d" /></svg>
          </SearchBox>
          <AppStrip>
            {taskApps.map((a) => (
              <AppSlot key={a.name} aria-label={a.name} $current={a.current}>
                <svg width="17" height="17" viewBox="0 0 17 17" overflow="visible">{a.art}</svg>
                {a.badge && <Badge $bg={a.badge[1]} $fg={a.badge[2]}>{a.badge[0]}</Badge>}
                {a.run && <RunMark $current={a.current} />}
              </AppSlot>
            ))}
          </AppStrip>
        </Apps>
        <Tray>
          <svg width="8" height="5" viewBox="0 0 8 5"><path d="M1 4l3-3 3 3" fill="none" stroke="#eee" strokeWidth="1.200" /></svg>
          <svg width="18" height="10" viewBox="-6 0 18 10"><path d="M2 8C-1 7 0 3 2.500 3.500 3 0 8 0 8.500 3L5 8z" fill="#dcdcdc" /><circle cx="8.500" cy="7" r="3" fill="#d62a2a" /><path d="M7.300 5.800l2.400 2.400m0-2.400L7.300 8.200" stroke="#fff" strokeWidth=".8" /></svg>
          <svg width="15" height="12" viewBox="-4 0 15 12" fill="none" stroke="#eee"><path d="M6.500 1.500H.5v7H8M3 11h4M8 1v2.500h3V1M9.500 3.500V10M9.500 1v1" /></svg>
          <svg width="11" height="8" viewBox="0 0 11 8" fill="none" stroke="#eee" strokeWidth=".9"><path d="M.5 2.500h1.800L5 .600v6.800L2.300 5.500H.5zM7.500 2.500l3 3M10.500 2.500l-3 3" /></svg>
          <Battery>
            <svg width="13" height="10" viewBox="0 0 13 10"><rect x=".5" y="2" width="10.500" height="6.500" rx="1.500" fill="#7fbf8a" stroke="#eee" /><path d="M12 4v3" stroke="#eee" strokeWidth="1.300" /><path d="M2 0h4v3.500c0 1.500-4 1.500-4 0z" fill="#eee" /></svg>
            80%
          </Battery>
          <Clock>1:37 PM<br />3/27/2026</Clock>
        </Tray>
      </Taskbar>

      <Overlay>
        <LookupDialog role="dialog" aria-label="Tra cứu PDF gốc">
          <LookupTitle>
            <AppMark />Tra cứu PDF gốc từ nhà phát hành hóa đơn
            <IconButton aria-label="Đóng"><Cross size={8} color="#222" width={1.4} /></IconButton>
          </LookupTitle>
          <LookupBody>Đang xử lý, xin chờ trong giây lát...</LookupBody>
          <LookupFooter>
            <Spinner />
            <Progress>Đang lấy file XML...</Progress>
            <MutedButton $width={87}>Tra cứu tự động</MutedButton>
            <MutedButton $width={73}>Gửi yêu cầu</MutedButton>
            <MutedButton $width={60}>Thoát</MutedButton>
          </LookupFooter>
          <ConfirmDialog role="alertdialog" aria-label="Thông báo">
            <ConfirmTitle>
              Thông báo
              <IconButton aria-label="Đóng thông báo"><Cross size={8} color="#cfc3d0" /></IconButton>
            </ConfirmTitle>
            <ConfirmText>
              Chương trình sẽ chạy chức năng tự động điền thông tin tra cứu. Trình duyệt web<br />
              sẽ tự động mở và bạn phải chờ trong giây lát để có thể thực hiện toàn bộ quá<br />
              trình này. Bạn có muốn tiếp tục không?
            </ConfirmText>
            <ConfirmActions>
              <ClassicButton $primary>Yes<Highlight /></ClassicButton>
              <ClassicButton>No</ClassicButton>
            </ConfirmActions>
          </ConfirmDialog>
        </LookupDialog>
      </Overlay>
    </Desktop>
  );
}
